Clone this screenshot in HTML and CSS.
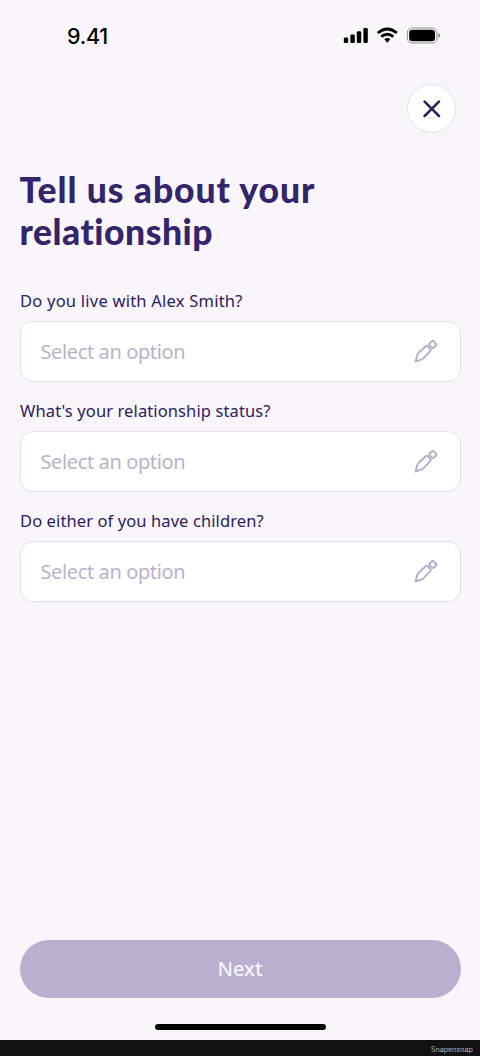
FILE: index.html
```html
<!DOCTYPE html>
<html lang="en">
<head>
<meta charset="utf-8">
<title>Tell us about your relationship</title>
<link rel="stylesheet" href="styles.css">
</head>
<body>
<svg class="defs" width="0" height="0" aria-hidden="true">
  <symbol id="pencil" viewBox="0 0 24 24">
    <g fill="none" stroke="currentColor" stroke-width="1.9" stroke-linejoin="round" stroke-linecap="round">
      <path d="M1.6 22.4 3.1 16.6Q3.5 15 4.7 13.8L11.7 7.2Q12.6 6.3 13.5 7.2L16.4 10.1Q17.3 11 16.4 11.9L9.8 18.9Q8.7 20.1 7.2 20.6Z"/>
      <path d="M15.6 4.5 17.8 2.3Q18.7 1.4 19.6 2.3L22 4.7Q22.9 5.6 22 6.5L19.8 8.7Q18.9 9.6 18 8.7L15.6 6.3Q14.7 5.4 15.6 4.5Z"/>
    </g>
  </symbol>
</svg>
<div class="screen">
  <header class="status">
    <span class="time">9.41</span>
    <svg class="indicators" width="98" height="18" viewBox="0 0 98 18">
      <rect x="0.8" y="11.4" width="4.4" height="5.6" rx="1.3"/>
      <rect x="7.4" y="8.4" width="4.4" height="8.6" rx="1.3"/>
      <rect x="13.8" y="5.2" width="4.4" height="11.8" rx="1.3"/>
      <rect x="20.4" y="2" width="4.4" height="15" rx="1.3"/>
      <g fill="none" stroke="#000" stroke-width="2.9">
        <path d="M34.8 7Q44.3-.8 53.8 7"/>
        <path d="M38.3 10.7Q44.3 5.8 50.3 10.7"/>
      </g>
      <path d="M41.3 13.2Q44.3 11 47.3 13.2L44.3 16.8Z"/>
      <rect x="64.3" y="2" width="29.6" height="15" rx="4.8" fill="none" stroke="#908d93"/>
      <rect x="66.2" y="3.8" width="25.8" height="11.4" rx="3.2"/>
      <path d="M95.3 7Q96.9 7.8 96.9 9.5T95.3 12Z" fill="#77747a"/>
    </svg>
  </header>
  <div class="toolbar">
    <button class="close" aria-label="Close">
      <svg width="18" height="18" viewBox="0 0 18 18"><path d="M1.6 1.6 16 16M16 1.6 1.6 16" fill="none" stroke="#2c2161" stroke-width="2.5" stroke-linecap="round"/></svg>
    </button>
  </div>
  <main class="form">
    <h1 class="title"><span class="line one">Tell us about your</span> <span class="line two">relationship</span></h1>
    <section class="field">
      <div class="label live">Do you live with Alex Smith?</div>
      <div class="select"><span class="placeholder">Select an option</span><svg class="pencil"><use href="#pencil"/></svg></div>
    </section>
    <section class="field">
      <div class="label marital">What's your relationship status?</div>
      <div class="select"><span class="placeholder">Select an option</span><svg class="pencil"><use href="#pencil"/></svg></div>
    </section>
    <section class="field">
      <div class="label children">Do either of you have children?</div>
      <div class="select"><span class="placeholder">Select an option</span><svg class="pencil"><use href="#pencil"/></svg></div>
    </section>
  </main>
  <footer class="actions">
    <button class="next">Next</button>
    <div class="home"></div>
  </footer>
</div>
<div class="credit">Snapensnap</div>
</body>
</html>
```
FILE: styles.css
```css
* { box-sizing: border-box; }
body {
  margin: 0;
  width: 480px;
  height: 1056px;
  display: flex;
  flex-direction: column;
  background: #faf5fb;
  color: #2c2161;
  font-family: "Noto Sans", sans-serif;
}
button { border: 0; padding: 0; font: inherit; }
.defs { position: absolute; }
.screen { flex: 1; display: flex; flex-direction: column; }
.status {
  height: 84px;
  padding: 23px 38px 0 67px;
  display: flex;
  justify-content: space-between;
  align-items: flex-start;
}
.time {
  font: 500 21.5px/26px Inter, sans-serif;
  letter-spacing: -0.3px;
  color: #000;
}
.indicators { margin: 3px 1px 0 0; }
.toolbar { display: flex; justify-content: flex-end; padding-right: 24px; }
.close {
  width: 49px;
  height: 49px;
  display: grid;
  place-items: center;
  border: 1px solid #e4deeb;
  border-radius: 50%;
  background: #fff;
}
.form { padding: 36px 19.5px 0; }
.title {
  margin: 0 0 36px;
  font: 900 35.5px/42px Lato, sans-serif;
  color: #33256b;
}
.line { display: block; white-space: nowrap; }
.one { letter-spacing: 0.92px; }
.two { letter-spacing: 0.5px; }
.field { height: 109.8px; }
.label {
  height: 32px;
  padding: 1px 0 0 0.5px;
  font-size: 16.5px;
  line-height: 22px;
  white-space: nowrap;
}
.live { letter-spacing: 0.23px; }
.marital { letter-spacing: 0.11px; }
.children { letter-spacing: 0.1px; }
.select {
  height: 61px;
  padding: 0 22px 0 20px;
  display: flex;
  align-items: center;
  justify-content: space-between;
  border: 1.4px solid #e4deee;
  border-radius: 13px;
  background: #fff;
}
.placeholder {
  font-size: 20px;
  letter-spacing: -0.38px;
  color: #b9b3cd;
}
.pencil { width: 24px; height: 24px; margin-top: -1px; color: #b4adca; }
.actions {
  margin-top: auto;
  padding: 0 19.5px 10px;
  display: flex;
  flex-direction: column;
  align-items: center;
  gap: 25.5px;
}
.next {
  width: 100%;
  height: 58.5px;
  border-radius: 30px;
  background: #b9afcf;
  color: #f9f4fb;
  font-size: 20px;
  font-weight: 500;
}
.home { width: 171px; height: 6px; border-radius: 3px; background: #000; }
.credit {
  height: 16.5px;
  padding-right: 7px;
  background: #121214;
  color: #b9b9b9;
  font: 7.2px/19px Inter, sans-serif;
  text-align: right;
}
```
